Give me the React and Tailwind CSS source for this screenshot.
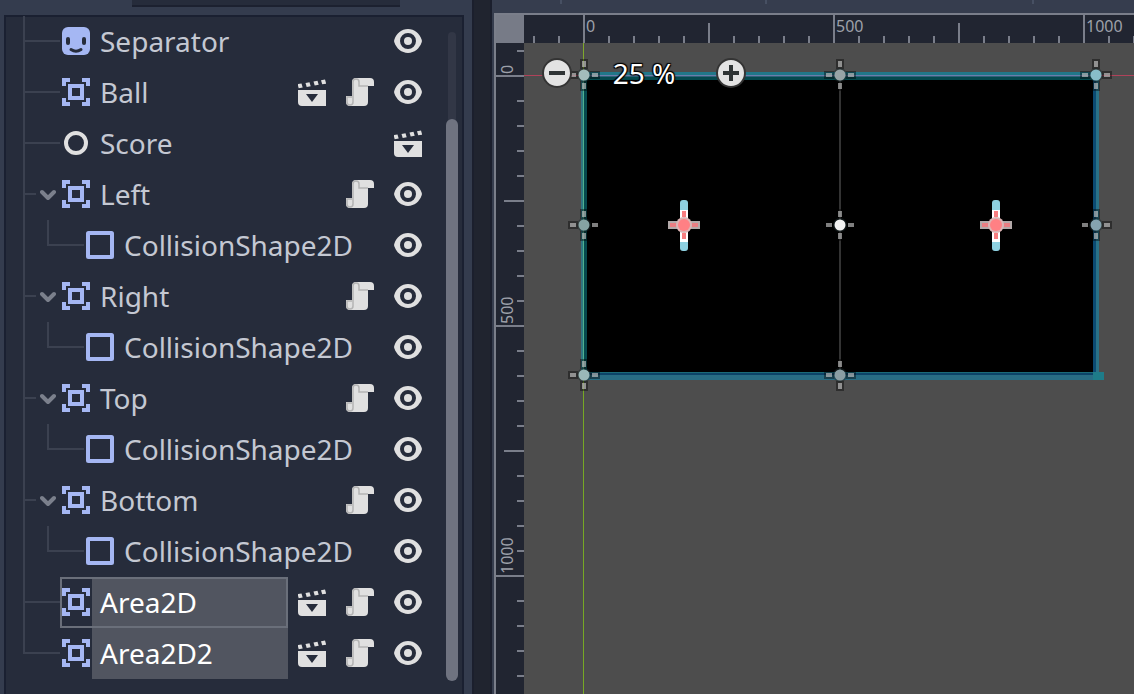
import React from "react";

const NODES = [
  { name: "Separator", kind: "sprite", tools: ["eye"] },
  { name: "Ball", kind: "area", tools: ["scene", "script", "eye"] },
  { name: "Score", kind: "node", tools: ["scene"] },
  { name: "Left", kind: "area", open: true, tools: ["script", "eye"] },
  { name: "CollisionShape2D", kind: "shape", child: true, tools: ["eye"] },
  { name: "Right", kind: "area", open: true, tools: ["script", "eye"] },
  { name: "CollisionShape2D", kind: "shape", child: true, tools: ["eye"] },
  { name: "Top", kind: "area", open: true, tools: ["script", "eye"] },
  { name: "CollisionShape2D", kind: "shape", child: true, tools: ["eye"] },
  { name: "Bottom", kind: "area", open: true, tools: ["script", "eye"] },
  { name: "CollisionShape2D", kind: "shape", child: true, tools: ["eye"] },
  { name: "Area2D", kind: "area", selected: true, focused: true, tools: ["scene", "script", "eye"] },
  { name: "Area2D2", kind: "area", selected: true, last: true, tools: ["scene", "script", "eye"] },
];

function NodeIcon({ kind }) {
  return (
    <svg className="size-7 shrink-0" viewBox="0 0 28 28" fill="none" aria-hidden="true">
      {kind === "sprite" && (
        <>
          <rect width="28" height="28" rx="6" fill="#a5b7f3" />
          <rect x="4" y="10" width="4" height="8" rx="2" fill="#262c3b" />
          <rect x="20" y="10" width="4" height="8" rx="2" fill="#262c3b" />
          <path d="M9 22.500q5 3.500 10 0" stroke="#262c3b" strokeWidth="3" strokeLinecap="round" />
        </>
      )}
      {kind === "area" && (
        <path
          fill="#a5b7f3"
          fillRule="evenodd"
          d="M0 0h8v4H4v4H0zM20 0h8v8h-4V4h-4zM0 20h4v4h4v4H0zM24 20h4v8h-8v-4h4zM6 6h16v16H6zM10 10v8h8v-8z"
        />
      )}
      {kind === "node" && <circle cx="14" cy="14" r="10" stroke="#e0e0e0" strokeWidth="4" />}
      {kind === "shape" && (
        <rect x="2" y="2" width="24" height="24" rx="0.5" stroke="#a5b7f3" strokeWidth="4" strokeLinejoin="round" />
      )}
    </svg>
  );
}

const TOOL_LABELS = { eye: "Toggle visibility", script: "Open script", scene: "Open in editor" };

function ToolIcon({ tool }) {
  return (
    <svg className="size-7" viewBox="0 0 28 28" fill="none" aria-hidden="true">
      {tool === "eye" && (
        <>
          <path d="M14 2C7.500 2 2.500 6.500.4 12.400q-.6 1.600 0 3.200C2.500 21.500 7.500 26 14 26s11.500-4.500 13.600-10.400q.6-1.600 0-3.200C25.500 6.500 20.500 2 14 2z" fill="#e0e0e0" />
          <circle cx="14" cy="14" r="6" stroke="#262c3b" strokeWidth="4" />
        </>
      )}
      {tool === "script" && (
        <>
          <path d="M10 0h14a4 4 0 0 1 4 4v4h-6v16a4 4 0 0 1-4 4H4a4 4 0 0 1-4-4v-6h6V4a4 4 0 0 1 4-4z" fill="#e0e0e0" />
          <path d="M10 1a3 3 0 0 0-3 3v20a3 3 0 0 1-6 0v-5h5M10 1a3 3 0 0 1 3 3v4h9" stroke="#b4b4b4" strokeWidth="1.500" />
        </>
      )}
      {tool === "scene" && (
        <>
          <path d="M0 12h28v16H4a4 4 0 0 1-4-4z" fill="#e0e0e0" />
          <path d="M-.5 6.200l4-.7 1.200 4-4 .7zM7.500 4.900l4-.7 1.200 4-4 .7zM15.500 3.500l4-.7 1.200 4-4 .7zM23 2.300l4-.7 1.200 4-4 .7z" fill="#e0e0e0" />
          <path d="M8 16h12l-6 8z" fill="#262c3b" />
        </>
      )}
    </svg>
  );
}

function Guides({ node }) {
  if (node.child) {
    return (
      <div className="flex shrink-0">
        <div className="w-6 border-l-2 border-[#3b4150]" />
        <div className="h-[26px] w-[37px] border-b-2 border-l-2 border-[#3b4150]" />
      </div>
    );
  }
  return (
    <div className="flex w-[37px] shrink-0">
      <div className={node.open ? "flex w-[13px] flex-col" : "flex flex-1 flex-col"}>
        <div className="h-[26px] border-b-2 border-l-2 border-[#3b4150]" />
        {!node.last && <div className="flex-1 border-l-2 border-[#3b4150]" />}
      </div>
      {node.open && (
        <button type="button" aria-label={"Collapse " + node.name} className="flex w-6 items-center justify-center pb-0.5">
          <svg className="size-4" viewBox="0 0 16 16" fill="none" aria-hidden="true">
            <path d="M2 6l6 6 6-6" stroke="#7b808c" strokeWidth="4" strokeLinecap="round" strokeLinejoin="round" />
          </svg>
        </button>
      )}
    </div>
  );
}

function TreeRow({ node }) {
  return (
    <li className="flex h-[51px] pl-[17px] pr-6">
      <Guides node={node} />
      <button
        type="button"
        aria-pressed={!!node.selected}
        className={
          "flex min-w-0 flex-1 items-stretch border-2 text-left text-[28px] leading-[46px] " +
          (node.focused ? "border-[#6a6f7a]" : "border-transparent")
        }
      >
        <span className="flex items-center pb-0.5 pr-0.5">
          <NodeIcon kind={node.kind} />
        </span>
        <span
          className={
            "flex-1 whitespace-nowrap pl-2 " +
            (node.selected ? "bg-[#515560] text-white " : "text-[#c4c8d2] ") +
            (node.selected && !node.focused ? "-my-0.5 -mr-0.5 py-0.5" : "")
          }
        >
          {node.name}
        </span>
      </button>
      <div className="flex items-center gap-5 pb-0.5 pl-2.5">
        {node.tools.map((tool) => (
          <button key={tool} type="button" aria-label={TOOL_LABELS[tool]}>
            <ToolIcon tool={tool} />
          </button>
        ))}
      </div>
    </li>
  );
}

function SceneDock() {
  return (
    <aside className="flex w-[472px] shrink-0 flex-col bg-[#343c4e] pl-1 pr-2">
      <div className="flex h-[15px] shrink-0 items-start pl-32">
        <input aria-label="Filter nodes" className="h-[7px] w-[268px] border-b-2 border-[#1c2130] bg-[#262c3b]" />
      </div>
      <div className="flex min-h-0 flex-1 border-2 border-b-0 border-[#1a2031] bg-[#262c3b]">
        <ul className="-mt-px min-w-0 flex-1">
          {NODES.map((node, i) => (
            <TreeRow key={i} node={node} />
          ))}
        </ul>
        <div className="mb-[13px] mr-1 mt-[15px] flex w-3 flex-col items-center">
          <div className="-mb-1.5 h-[93px] w-2 rounded-t-full bg-[#323746]" />
          <div className="w-3 flex-1 rounded-full bg-[#6f7380]" />
        </div>
      </div>
    </aside>
  );
}

const STEPS = Array.from({ length: 120 }, (_, i) => i - 2);
const LABELS = [0, 500, 1000];

function tickLength(i) {
  if (i % 10 === 0) return 28;
  return i % 5 === 0 ? 20 : 7;
}

function RulerX() {
  return (
    <svg className="h-7 w-full min-w-0 bg-[#212531]" aria-label="Horizontal ruler">
      {STEPS.map((i) => (
        <rect key={i} x={59 + i * 25} y={28 - tickLength(i)} width="2" height={tickLength(i)} fill="#7a7e8a" />
      ))}
      {LABELS.map((value) => (
        <text key={value} x={62 + value / 2} y="17" fontSize="16" fill="#9da0a9">
          {value}
        </text>
      ))}
    </svg>
  );
}

function RulerY() {
  return (
    <svg className="h-full w-7 bg-[#212531]" aria-label="Vertical ruler">
      {STEPS.filter((i) => i > -2).map((i) => (
        <rect key={i} x={28 - tickLength(i)} y={32 + i * 25} width={tickLength(i)} height="2" fill="#7a7e8a" />
      ))}
      {LABELS.map((value) => (
        <text
          key={value}
          transform={`translate(17 ${31 + value / 2}) rotate(-90)`}
          fontSize="16"
          fill="#9da0a9"
        >
          {value}
        </text>
      ))}
    </svg>
  );
}

const ARMS = [
  [-14, -2, 6, 4],
  [8, -2, 6, 4],
  [-2, -14, 4, 6],
  [-2, 8, 4, 6],
];

function Anchor({ x, y, fill = "#93a9aa" }) {
  return (
    <g transform={`translate(${x} ${y})`}>
      {ARMS.map(([ax, ay, w, h], i) => (
        <g key={i}>
          <rect x={ax - 2} y={ay - 2} width={w + 4} height={h + 4} fill="#000" fillOpacity="0.4" />
          <rect x={ax} y={ay} width={w} height={h} fill="#d4d4d4" fillOpacity="0.6" />
        </g>
      ))}
      <circle r="7" fill="#1c2a2c" fillOpacity="0.5" />
      <circle r="5.500" fill={fill} />
    </g>
  );
}

function Paddle({ x, y }) {
  return (
    <g transform={`translate(${x} ${y})`}>
      <rect x="-4" y="-25" width="8" height="51" rx="3" fill="#8ed0e0" />
      <rect x="-4" y="-15" width="8" height="32" fill="#fff" />
      <rect x="-16" y="-4" width="32" height="8" fill="#b3a9a9" />
      <circle r="8" fill="#dcb4b4" />
      {ARMS.map(([ax, ay, w, h], i) => (
        <rect key={i} x={ax} y={ay} width={w} height={h} fill={i < 2 ? "#ea7e82" : "#f87e80"} />
      ))}
      <circle r="6" fill="#ff8084" />
    </g>
  );
}

function Scene() {
  return (
    <svg className="block h-full w-full" aria-label="Scene viewport">
      <rect x="60" y="32" width="512" height="300" fill="#000" />
      <rect x="0" y="32" width="100%" height="1" fill="#b0425a" />
      <rect x="57" y="29" width="518" height="3" fill="#217789" />
      <rect x="57" y="32" width="515" height="1" fill="#6d7cab" />
      <rect x="57" y="33" width="515" height="1" fill="#2d6379" />
      <rect x="57" y="34" width="515" height="3" fill="#05494e" />
      <rect x="57" y="32" width="3" height="304" fill="#2f7782" />
      <rect x="60" y="35" width="3" height="297" fill="#05494e" />
      <rect x="569" y="35" width="3" height="297" fill="#0b4a72" />
      <rect x="572" y="32" width="3" height="304" fill="#2a7287" />
      <rect x="60" y="329" width="520" height="3" fill="#0c4468" />
      <rect x="60" y="332" width="520" height="5" fill="#286d84" />
      <rect x="60" y="329" width="512" height="1" fill="#1a6a78" />
      <rect x="569" y="329" width="11" height="8" fill="#1e7c89" />
      <rect x="59" y="0" width="1" height="32" fill="#7fa82c" />
      <rect x="59" y="32" width="1" height="300" fill="#4fb08c" />
      <rect x="59" y="332" width="1" height="100%" fill="#76a824" />
      <rect x="315" y="32" width="2" height="300" fill="#333" />
      <Anchor x={60} y={32} fill="#a3bcbc" />
      <Anchor x={316} y={32} fill="#97a3a6" />
      <Anchor x={572} y={32} fill="#88bdc9" />
      <Anchor x={60} y={182} fill="#86a3a3" />
      <Anchor x={316} y={182} fill="#f2f2f2" />
      <Anchor x={572} y={182} fill="#86a3af" />
      <Anchor x={60} y={332} fill="#9ab8b8" />
      <Anchor x={316} y={332} fill="#8a9ea3" />
      <Paddle x={160} y={182} />
      <Paddle x={472} y={182} />
    </svg>
  );
}

function ZoomButton({ label, d }) {
  return (
    <button type="button" aria-label={label}>
      <svg className="size-[30px]" viewBox="0 0 30 30" aria-hidden="true">
        <circle cx="15" cy="15" r="14" fill="#e3e3e3" stroke="#343434" strokeWidth="2" />
        <path d={d} fill="none" stroke="#2f3435" strokeWidth="4" />
      </svg>
    </button>
  );
}

function CanvasEditor() {
  return (
    <main className="flex min-w-0 flex-1 flex-col bg-[#363d4e] pl-0.5">
      <div className="flex h-[13px] shrink-0 items-start pl-[66px]">
        <div className="h-1 w-[205px] border-l-2 border-[#475063]" />
        <div className="h-1 w-[267px] border-l-2 border-[#475063]" />
        <div className="h-1 border-l-2 border-[#475063]" />
      </div>
      <div className="grid min-h-0 flex-1 grid-cols-[28px_1fr] grid-rows-[28px_1fr] border-l-2 border-t-2 border-[#7a7e8a]">
        <div className="bg-[#777b87]" />
        <RulerX />
        <RulerY />
        <div className="relative min-w-0 overflow-hidden bg-[#4d4d4d]">
          <Scene />
          <div className="absolute left-[18px] top-[15px] flex items-center">
            <ZoomButton label="Zoom out" d="M7 15h16" />
            <button
              type="button"
              className="w-36 text-center text-[28px] leading-[30px] text-white [text-shadow:1px_1px_1px_#000,-1px_-1px_1px_#000,1px_-1px_1px_#000,-1px_1px_1px_#000]"
            >
              25 %
            </button>
            <ZoomButton label="Zoom in" d="M7 15h16M15 7v16" />
          </div>
        </div>
      </div>
    </main>
  );
}

export default function App() {
  return (
    <div className="flex h-screen overflow-hidden bg-[#212531] font-['Noto_Sans',sans-serif]">
      <SceneDock />
      <div className="w-5 shrink-0 border-x-2 border-[#1b1f2d] bg-[#20242f]" />
      <CanvasEditor />
    </div>
  );
}
